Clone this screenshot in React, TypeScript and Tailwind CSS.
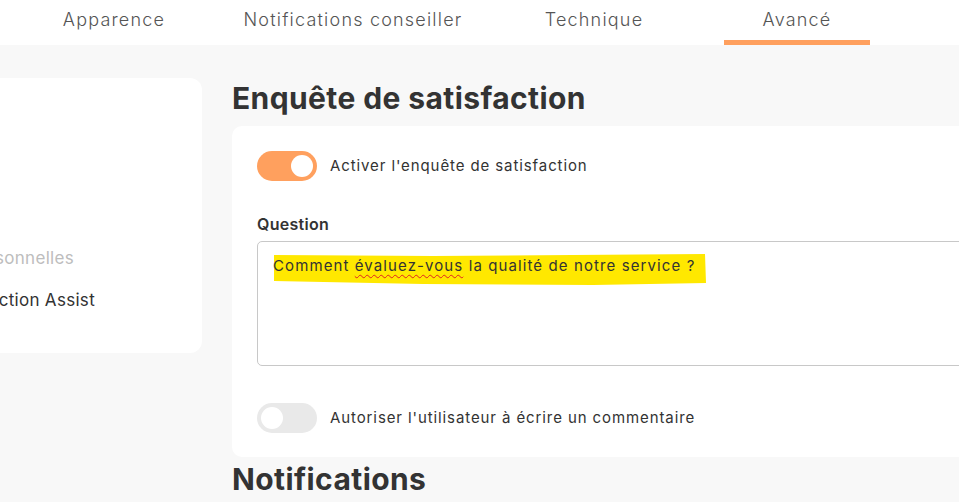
import React from "react";

function Toggle({ on }: { on: boolean }) {
  return (
    <div
      className={
        "flex h-[30px] w-[60px] shrink-0 items-center rounded-full px-[4px] " +
        (on ? "justify-end bg-[#ffa05e]" : "justify-start bg-[#e9e9e9]")
      }
    >
      <div className="h-[22px] w-[22px] rounded-full bg-white" />
    </div>
  );
}

export default function App() {
  return (
    <div
      className="h-[502px] w-[959px] overflow-hidden bg-[#f8f8f8] text-[#333]"
      style={{ fontFamily: "Inter, 'Noto Sans', sans-serif" }}
    >
      {/* Tabs */}
      <div className="flex h-[45px] bg-white">
        <div className="flex w-[228px] items-start justify-center pt-[6px] text-[18px] font-light tracking-[1.2px] text-[#555]">
          Apparence
        </div>
        <div className="flex w-[250px] items-start justify-center pt-[6px] text-[18px] font-light tracking-[1.2px] text-[#555]">
          Notifications conseiller
        </div>
        <div className="flex w-[232px] items-start justify-center pt-[6px] text-[18px] font-light tracking-[1.2px] text-[#555]">
          Technique
        </div>
        <div className="ml-[14px] flex w-[146px] items-start justify-center border-b-[5px] border-[#ffa05e] pt-[6px] text-[18px] font-light tracking-[1.2px] text-[#555]">
          Avancé
        </div>
      </div>

      <div className="flex gap-[30px]">
        {/* Left card */}
        <div className="-ml-[40px] mt-[33px] flex h-[275px] w-[242px] shrink-0 flex-col items-end justify-end overflow-hidden rounded-[12px] bg-white pb-[40px]">
          <div className="mb-[16px] mr-[128px] shrink-0 whitespace-nowrap text-[17px] tracking-[0.3px] text-[#bdbdbd]">
            personnelles
          </div>
          <div className="mr-[107px] shrink-0 whitespace-nowrap text-[17px] tracking-[0.3px] text-[#333]">
            Satisfaction Assist
          </div>
        </div>

        {/* Main */}
        <div className="w-[800px] shrink-0">
          <h1 className="mt-[33px] text-[30px] font-bold leading-[40px] tracking-[0.4px] text-[#333]">
            Enquête de satisfaction
          </h1>
          <div className="mt-[8px] rounded-[10px] bg-white px-[25px] pb-[24px] pt-[25px]">
            <div className="flex items-center gap-[13px]">
              <Toggle on={true} />
              <span className="text-[15px] tracking-[0.9px] text-[#333]">
                Activer l'enquête de satisfaction
              </span>
            </div>
            <div className="mt-[31px] text-[16px] font-semibold tracking-[0.3px] text-[#333]">
              Question
            </div>
            <div className="mt-[5px] h-[125px] w-[760px] rounded-[5px] border border-[#c8c8c8] px-[15px] pt-[11px]">
              <span className="relative inline-block text-[15px] tracking-[1.1px] text-[#333]">
                <svg
                  className="absolute left-[0px] top-[-1px] h-[32px] w-[434px]"
                  viewBox="0 0 434 32"
                  preserveAspectRatio="none"
                >
                  <path
                    d="M1 1 L160 2 L300 1 L432 0 L433 29 L320 31 L150 30 L1 27 Z"
                    fill="#ffe800"
                  />
                </svg>
                <span className="relative">
                  Comment{" "}
                  <span className="underline decoration-[#e02020] decoration-wavy decoration-1 underline-offset-[3px]">
                    évaluez-vous
                  </span>{" "}
                  la qualité de notre service ?
                </span>
              </span>
            </div>
            <div className="mt-[37px] flex items-center gap-[13px]">
              <Toggle on={false} />
              <span className="text-[15px] tracking-[0.9px] text-[#333]">
                Autoriser l'utilisateur à écrire un commentaire
              </span>
            </div>
          </div>
          <h2 className="mt-[2px] text-[30px] font-bold leading-[40px] tracking-[0.4px] text-[#333]">
            Notifications
          </h2>
        </div>
      </div>
    </div>
  );
}
